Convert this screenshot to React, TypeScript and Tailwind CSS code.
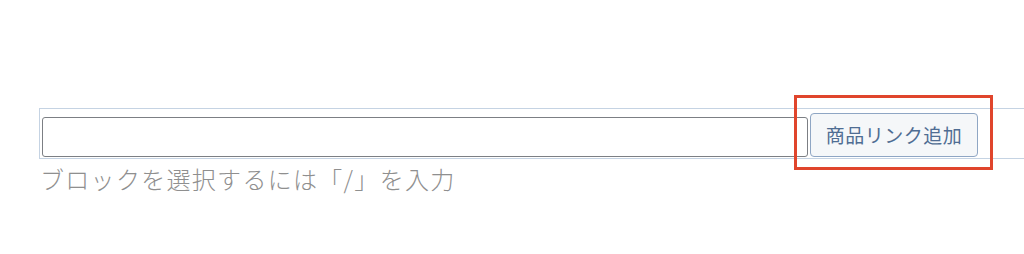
import React from 'react';

const font = '"Noto Sans CJK JP", "Noto Sans", sans-serif';

const ProductLinkBlock: React.FC = () => {
  return (
    <div className="pl-[39px] pt-[108px]">
      <div className="relative">
        <div className="flex items-end h-[51px] border border-r-0 border-[#c5d3e3] pl-[2px] pb-[1px]">
          <input
            type="text"
            className="w-[766px] h-[40px] border border-[#7c7f84] rounded-[3px] bg-white outline-none"
          />
          <button
            type="button"
            className="ml-[2px] w-[168px] h-[44px] rounded-[4px] border border-[#8fa6c4] bg-[#f5f7f9] text-[19px] text-[#4f6d93] tracking-[0.5px]"
            style={{ fontFamily: font }}
          >
            商品リンク追加
          </button>
        </div>
        {/* annotation frame */}
        <div className="absolute left-[755px] top-[-13px] w-[199px] h-[75px] border-[3px] border-[#e0452c] pointer-events-none" />
      </div>
      <p
        className="mt-[4px] pl-[1px] text-[24px] leading-[32px] font-light text-[#8f8f8f] tracking-[1.3px]"
        style={{ fontFamily: font }}
      >
        ブロックを選択するには「/」を入力
      </p>
    </div>
  );
};

export default function App() {
  return (
    <div className="w-[1024px] h-[254px] bg-white overflow-hidden">
      <ProductLinkBlock />
    </div>
  );
}
